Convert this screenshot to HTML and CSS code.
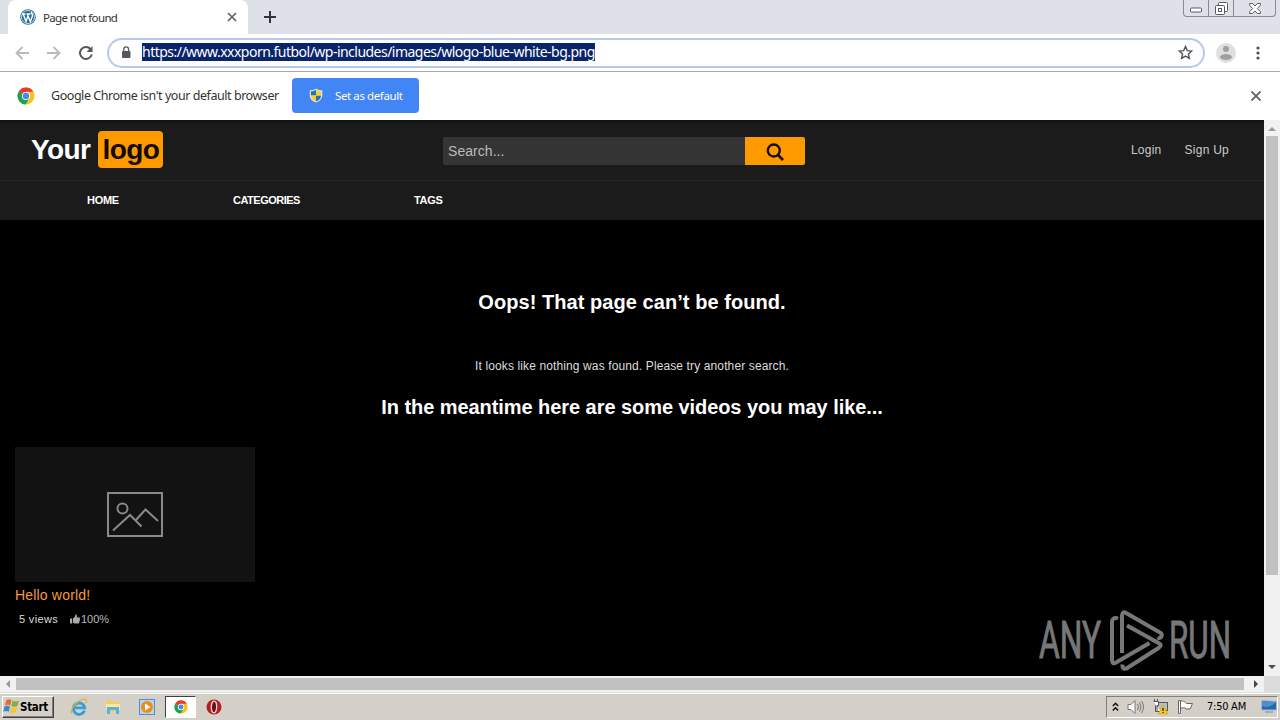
FILE: index.html
```html
<!DOCTYPE html>
<html lang="en">
<head>
  <meta charset="UTF-8">
  <title>Page not found</title>
  <link rel="stylesheet" href="styles.css">
</head>
<body>
  <svg width="0" height="0" class="defs">
    <symbol id="chrome" viewBox="0 0 18 18">
      <circle cx="9" cy="9" r="8.5" fill="#fbc116"/>
      <path d="M9 9L1.6 4.8A8.5 8.5 0 0 1 16.4 4.8H9z" fill="#e33b2e"/>
      <path d="M1.6 4.8A8.5 8.5 0 0 0 8.6 17.5L12.4 11 9 9z" fill="#1da05a"/>
      <circle cx="9" cy="9" r="4.1" fill="#fff"/>
      <circle cx="9" cy="9" r="3.2" fill="#4a87ee"/>
    </symbol>
  </svg>

  <div class="tabs">
    <div class="tab">
      <svg width="16" height="16" viewBox="0 0 16 16"><circle cx="8" cy="8" r="7.8" fill="#27709a"/><circle cx="8" cy="8" r="6.6" fill="none" stroke="#d9e9f1" stroke-width=".8"/><path d="M2 5h3.5M6.5 5h4M3.3 5.2L6 12.5 8 7M7.4 5.2L10.3 12.5 12.4 7.2C13 5 11 4.5 11.4 3" fill="none" stroke="#fff" stroke-width="1.4"/></svg>
      <span class="tab-title">Page not found</span>
      <svg class="tab-close" width="10" height="10" viewBox="0 0 10 10"><path d="M1 1l8 8M9 1L1 9" stroke="#5f6368" stroke-width="1.7"/></svg>
    </div>
    <svg class="new-tab" width="12" height="12" viewBox="0 0 12 12"><path d="M6 0v12M0 6h12" stroke="#303338" stroke-width="2"/></svg>
    <div class="win-buttons">
      <span><svg class="minimize" width="12" height="6" viewBox="0 0 12 6"><rect x=".5" y="1" width="11" height="4" rx="1" fill="#fff" stroke="#555a66"/></svg></span>
      <span><svg width="13" height="13" viewBox="0 0 13 13" fill="#fff" stroke="#555a66"><rect x="3.5" y=".5" width="9" height="9" rx="1"/><rect x=".5" y="3.5" width="9" height="9" rx="1"/><rect x="3.5" y="6.5" width="3" height="3"/></svg></span>
      <span><svg width="12" height="11" viewBox="0 0 12 11"><path d="M.7.5h3L6 3 8.3.5h3v2l-3 3 3 3v2h-3L6 8l-2.300 2.500h-3v-2l3-3-3-3z" fill="#fff" stroke="#555a66"/></svg></span>
    </div>
  </div>

  <div class="toolbar">
    <svg class="arrow" width="14" height="14" viewBox="0 0 14 14"><path d="M14 7H1.500M7.500 1l-6 6 6 6" fill="none" stroke="#b8babd" stroke-width="1.800"/></svg>
    <svg class="arrow" width="14" height="14" viewBox="0 0 14 14"><path d="M0 7h12.500M6.500 1l6 6-6 6" fill="none" stroke="#b8babd" stroke-width="1.800"/></svg>
    <svg class="reload" width="16" height="16" viewBox="0 0 16 16"><path d="M13.800 9.500A6 6 0 1 1 12.500 4" fill="none" stroke="#55585d" stroke-width="2"/><path d="M14.500 1v6h-6z" fill="#55585d"/></svg>
    <div class="address">
      <svg width="10" height="13" viewBox="0 0 10 13"><rect x="1" y="5" width="8.500" height="7" rx="1" fill="#55585d"/><path d="M2.800 5V3.300a2.400 2.400 0 0 1 4.800 0V5" fill="none" stroke="#55585d" stroke-width="1.300"/></svg>
      <span class="url">https://www.xxxporn.futbol/wp-includes/images/wlogo-blue-white-bg.png</span>
      <svg class="star" width="15" height="15" viewBox="0 0 15 15"><path d="M7.500 1.500l1.800 4.100 4.500.4-3.400 3 1 4.400-3.900-2.300-3.900 2.300 1-4.400-3.400-3 4.500-.4z" fill="none" stroke="#50535a" stroke-width="1.400"/></svg>
    </div>
    <svg class="avatar" width="20" height="20" viewBox="0 0 20 20"><circle cx="10" cy="10" r="10" fill="#dfdfdf"/><circle cx="10" cy="6" r="3" fill="#a0a0a0"/><ellipse cx="10" cy="14" rx="6" ry="3" fill="#a0a0a0"/></svg>
    <svg class="dots" width="4" height="14" viewBox="0 0 4 14" fill="#4c4f54"><circle cx="2" cy="2" r="1.600"/><circle cx="2" cy="7" r="1.600"/><circle cx="2" cy="12" r="1.600"/></svg>
  </div>

  <div class="infobar">
    <svg width="18" height="18"><use href="#chrome"/></svg>
    <span class="info-text">Google Chrome isn't your default browser</span>
    <div class="set-default">
      <svg width="14" height="15" viewBox="0 0 14 15"><path d="M7 .5C5 2 3 2.300.700 2.300V7c0 4 3 6.500 6.300 7.500 3.300-1 6.300-3.500 6.300-7.500V2.300C11 2.300 9 2 7 .5z" fill="#e8e7c8"/><path d="M7 1.800V7.500H1.900V3.300C4 3.300 5.500 2.800 7 1.800zM7 7.500h5c0 3-2 5-5 6z" fill="#2472bd"/><path d="M7 1.800c1.500 1 3 1.500 5 1.500v4.200H7zM7 7.500v6c-3-1-5-3-5.100-6z" fill="#f8cf32"/></svg>
      <span>Set as default</span>
    </div>
    <svg class="info-close" width="10" height="10" viewBox="0 0 10 10"><path d="M.5.5l9 9M9.500.5l-9 9" stroke="#62666a" stroke-width="1.900"/></svg>
  </div>

  <div class="view">
    <div class="page">
      <header>
        <div class="logo"><span>Your</span><span class="logo-box">logo</span></div>
        <div class="search">
          <div class="search-field">Search...</div>
          <div class="search-btn"><svg width="18" height="18" viewBox="0 0 18 18" fill="none" stroke="#110c08"><circle cx="7.800" cy="7.500" r="6" stroke-width="2.400"/><path d="M12 12l5 5" stroke-width="2.600"/></svg></div>
        </div>
        <div class="account"><span>Login</span><span>Sign Up</span></div>
      </header>
      <nav><span class="nav-home">HOME</span><span class="nav-cat">CATEGORIES</span><span class="nav-tags">TAGS</span></nav>
      <main>
        <h1>Oops! That page can’t be found.</h1>
        <p>It looks like nothing was found. Please try another search.</p>
        <h2>In the meantime here are some videos you may like...</h2>
        <div class="video">
          <div class="thumb">
            <svg width="56" height="45" viewBox="0 0 56 45" fill="none" stroke="#898989" stroke-width="2"><rect x="1" y="1" width="54" height="43"/><circle cx="15.500" cy="16.500" r="5"/><path d="M6 38.500l17-15.500 11.500 11.500M28.500 28.500L38.500 17.500l12.500 11.500"/></svg>
          </div>
          <div class="video-title">Hello world!</div>
          <div class="video-info"><span class="views">5 views</span><svg width="10" height="10" viewBox="0 0 10 10" fill="#aaa"><path d="M0 4.500h2.200V9.500H0zM3 4.500L5 2.500 5.400.5c1.600 0 1.800 1.400 1.200 3h3.200c.4 2-.2 4.500-1 6H4.500L3 8.800z"/></svg><span class="rate">100%</span></div>
        </div>
      </main>
      <svg class="watermark" width="204" height="66" viewBox="0 0 204 66">
        <g class="wm-text">
          <text x="1" y="49" textLength="62" lengthAdjust="spacingAndGlyphs">ANY</text>
          <text x="131" y="49" textLength="62" lengthAdjust="spacingAndGlyphs">RUN</text>
        </g>
        <g fill="none" stroke="#777" stroke-width="4" stroke-linejoin="round" stroke-linecap="butt">
          <path d="M80 9.500C76 8 74 10 74 13v38c0 3.500 1.500 4 4 2.500L111.500 34"/>
          <path d="M84 44V7c0-3 1.500-4.500 4-3l34 19.500c3.500 2 1 7-2.500 5"/>
          <path d="M89 16.500L120.500 34c3 1.500 3 3 0 5L90 58.500c-3.500 2.500-6 1-5.500-3"/>
        </g>
      </svg>
    </div>
    <div class="vscroll">
      <svg width="8" height="4" viewBox="0 0 8 4"><path d="M0 4l4-4 4 4z" fill="#9a9a9a"/></svg>
      <div class="vthumb"></div>
      <svg width="8" height="4" viewBox="0 0 8 4"><path d="M0 0h8L4 4z" fill="#4d4d4d"/></svg>
    </div>
  </div>

  <div class="hscroll">
    <svg width="4" height="8" viewBox="0 0 4 8"><path d="M4 0v8L0 4z" fill="#9a9a9a"/></svg>
    <div class="hthumb"></div>
    <svg width="4" height="8" viewBox="0 0 4 8"><path d="M0 0v8l4-4z" fill="#444"/></svg>
    <div class="corner"></div>
  </div>

  <div class="taskbar">
    <div class="start">
      <svg width="17" height="17" viewBox="0 0 16 16"><path d="M3 2c2-1 3-1 5 0L6.800 7c-2-1-3-1-5 0z" fill="#e86c32"/><path d="M9 2.500c2 1 4 1 6 0L13.500 7.500c-2 1-4 1-5.700 0z" fill="#7db343"/><path d="M1.500 8c2-1 3-1 5 0L5.300 13c-2-1-3-1-5 0z" fill="#3985c9"/><path d="M7.500 8.500c2 1 4 1 6 0L12 13.500c-2 1-4 1-5.700 0z" fill="#f4c637"/></svg>
      <span>Start</span>
    </div>
    <div class="quick">
      <svg width="18" height="18" viewBox="0 0 18 18" fill="none"><path d="M14.500 12.500A5.700 5.700 0 1 1 14.700 9.800H4" stroke="#369ed8" stroke-width="2.800"/><path d="M2 15.500C-1 13 7 2 14 1.200c3-.4 2.500 2.500 1.500 4" stroke="#e6ae32" stroke-width="1.300"/></svg>
      <svg width="18" height="18" viewBox="0 0 18 18"><path d="M2 2h5l1 2h8v10H2z" fill="#edcf69"/><path d="M2 6h14v6H2z" fill="#f9e8a0"/><path d="M3 9h12v7h-3v-4H6v4H3z" fill="#59afdf"/></svg>
      <svg width="18" height="18" viewBox="0 0 18 18"><rect x="1.500" y="1.500" width="15" height="15" fill="#b5d5ed" stroke="#4d92c8"/><circle cx="9" cy="9" r="6" fill="#ee8b20"/><path d="M7 5.500v7L12.500 9z" fill="#fff"/></svg>
    </div>
    <div class="task-active"><svg width="14" height="14"><use href="#chrome"/></svg></div>
    <svg class="opera" width="16" height="16" viewBox="0 0 16 16"><circle cx="8" cy="8" r="7.500" fill="#b51d20"/><ellipse cx="8" cy="8" rx="2.700" ry="5.800" fill="#6f1013" stroke="#f3dada" stroke-width="1.300"/></svg>
    <div class="tray">
      <svg width="7" height="10" viewBox="0 0 7 10"><path d="M.8 4L3.500 1.300 6.200 4M.8 8.500l2.700-2.700 2.700 2.700" fill="none" stroke="#111" stroke-width="1.500"/></svg>
      <svg width="17" height="16" viewBox="0 0 17 16" fill="none" stroke="#777"><path d="M1 5.500h3L8 1.500v13L4 10.500H1z" fill="#fff"/><path d="M10.500 5q2 3 0 6M12.500 3.500q3 4.500 0 9M14.500 2q4 6 0 12"/></svg>
      <svg width="17" height="16" viewBox="0 0 17 16"><rect x="5.500" y="3.500" width="10" height="8" fill="#b9bec2" stroke="#555"/><path d="M1.500 2.500h5v4H5v6h4M3.500 6.500v6h3" fill="#fff" stroke="#555"/><path d="M2.500 0v3M5.500 0v3" stroke="#555"/><path d="M11 6l5 9H6z" fill="#f5cb22" stroke="#c39a0d" stroke-width=".6"/><path d="M11 9v3M11 13v1" stroke="#222" stroke-width="1.300"/></svg>
      <svg width="17" height="16" viewBox="0 0 17 16" fill="#fff" stroke="#666"><path d="M1.500 1.500h2v13h-2zM3.500 2.500C7 1 8 3 9.500 4.500h6L13 10H9C7.500 8 6 8.500 3.500 9.500z"/></svg>
      <span class="clock">7:50 AM</span>
      <svg width="16" height="13" viewBox="0 0 16 13"><path d="M.5.5L15.500 1.500V10H.5z" fill="#2468ad" stroke="#9dbbd5"/><path d="M1 6Q8 9 15 2V1.800L1 1z" fill="#528fca"/><path d="M4 12h8" stroke="#7a8894"/></svg>
    </div>
  </div>
</body>
</html>
```
FILE: styles.css
```css
* { box-sizing: border-box; }
body { margin: 0; width: 1280px; height: 720px; overflow: hidden; background: #fff; font-family: "DejaVu Sans Condensed", "DejaVu Sans", sans-serif; color: #333; }
svg { display: block; flex: none; }
span { white-space: nowrap; }
.defs { position: absolute; }

/* browser */
.tabs { height: 34px; background: #dee1e7; display: flex; }
.tab { width: 240px; height: 34px; margin-left: 8px; padding: 0 12px; background: #fff; border-radius: 8px 8px 0 0; display: flex; align-items: center; }
.tab-title { font-family: "Noto Sans", sans-serif; font-size: 11.5px; margin-left: 7px; letter-spacing: -0.65px; }
.tab-close { margin-left: auto; margin-right: -1px; }
.new-tab { margin: 11px 0 0 16px; }
.win-buttons { display: flex; margin-left: auto; margin-right: 4px; height: 17px; border: 1px solid #858a94; border-top: 0; border-radius: 0 0 4px 4px; }
.win-buttons span { width: 25px; display: flex; align-items: center; justify-content: center; border-right: 1px solid #858a94; }
.win-buttons span:last-child { width: 41px; border-right: 0; }
.minimize { margin-top: 4px; }

.toolbar { height: 38px; border-bottom: 1px solid #a9a9af; display: flex; align-items: center; padding-left: 15px; }
.arrow { margin-right: 18px; }
.reload { margin-left: -1px; margin-right: 13px; }
.address { width: 1098px; height: 30px; border: 2px solid #b5c9ea; border-radius: 15px; display: flex; align-items: center; padding: 0 10px 0 12px; }
.url { font-family: "Noto Sans", sans-serif; font-size: 14px; line-height: 18px; height: 18px; margin-top: -1px; background: #0a246a; color: #fff; margin-left: 11px; letter-spacing: -0.52px; }
.star { margin-left: auto; }
.avatar { margin-left: 11px; }
.dots { margin-left: 20px; }

.infobar { height: 48px; background: #fff; display: flex; align-items: center; padding: 0 0 1px 17px; }
.info-text { font-family: "Noto Sans", sans-serif; font-size: 12.5px; margin-left: 16px; width: 241px; letter-spacing: -0.45px; }
.set-default { width: 127px; height: 35px; border-radius: 4px; background: #4285f4; color: #fff; display: flex; align-items: center; padding-left: 17px; gap: 12px; font: 11.5px "Noto Sans", sans-serif; letter-spacing: -0.4px; }
.info-close { margin-left: auto; margin-right: 19px; }

/* page */
.view { height: 556px; display: flex; }
.page { position: relative; width: 1264px; background: #000; color: #fff; font-family: "Liberation Sans", Arial, sans-serif; }
header { height: 61px; background: linear-gradient(#111, #1b1b1b 5px); border-bottom: 1px solid #252525; display: flex; padding: 0 35px 0 31px; }
.logo { display: flex; width: 412px; padding-top: 11px; font-size: 28px; font-weight: bold; line-height: 37px; letter-spacing: -0.6px; }
.logo-box { margin-left: 8px; width: 65px; height: 37px; background: #ff9900; color: #120b08; border-radius: 4px; text-align: center; }
.search { display: flex; height: 28px; margin-top: 17px; }
.search-field { width: 302px; background: #353535; color: #bbb; border-radius: 2px 0 0 2px; padding-left: 5px; font-size: 14px; line-height: 28px; letter-spacing: 0.05px; }
.search-btn { width: 60px; background: #ff9900; border-radius: 0 2px 2px 0; display: flex; align-items: center; justify-content: center; padding-top: 2px; }
.account { margin-left: auto; padding-top: 22px; display: flex; gap: 23px; font-size: 12px; line-height: 16px; color: #ccc; letter-spacing: 0.25px; }
nav { height: 39px; background: #1b1b1b; display: flex; padding-left: 87px; font-size: 11px; font-weight: bold; line-height: 38px; letter-spacing: -0.3px; }
.nav-home { width: 146px; }
.nav-cat { width: 181px; letter-spacing: -0.5px; }
main { text-align: center; }
h1, h2 { margin: 0; font-size: 20px; line-height: 24px; }
h1 { padding-top: 70px; letter-spacing: 0.06px; }
p { margin: 44px 0 0; font-size: 12px; line-height: 16px; color: #ddd; letter-spacing: 0.12px; }
h2 { margin-top: 21px; letter-spacing: -0.06px; }
.video { width: 240px; margin: 28px 0 0 15px; text-align: left; }
.thumb { height: 135px; background: #121212; display: flex; align-items: center; justify-content: center; }
.video-title { color: #f29b3c; font-size: 14px; line-height: 26px; letter-spacing: 0.18px; }
.video-info { display: flex; align-items: center; font-size: 11px; line-height: 22px; color: #bbb; padding-left: 4px; }
.views { width: 51px; color: #ddd; letter-spacing: 0.35px; }
.rate { margin-left: 1px; }
.watermark { position: absolute; left: 1038px; top: 489px; overflow: visible; }
.wm-text { font: 52px Roboto, sans-serif; fill: #777; stroke: #777; stroke-width: 1px; }

.vscroll { width: 16px; background: #f1f1f1; display: flex; flex-direction: column; align-items: center; padding: 7px 0; }
.vthumb { width: 12px; height: 439px; margin: 5px 0 auto; background: #c1c1c1; }
.hscroll { height: 16px; background: #f1f1f1; display: flex; align-items: center; padding-left: 6px; }
.hthumb { width: 1228px; height: 12px; margin: 0 10px 0 6px; background: #c1c1c1; }
.corner { width: 16px; height: 16px; margin-left: auto; background: #dcdcdc; }

/* taskbar */
.taskbar { height: 28px; background: #d4d0c8; border-top: 1px solid #e4e1da; box-shadow: inset 0 1px #fff; display: flex; align-items: center; padding: 0 2px; }
.start { width: 52px; height: 22px; background: #d4d0c8; border: 1px solid; border-color: #fff #404040 #404040 #fff; box-shadow: inset -1px -1px #808080; display: flex; align-items: center; padding-left: 0; color: #000; font-size: 11.5px; font-weight: bold; }
.start span { letter-spacing: -0.3px; }
.quick { display: flex; gap: 16px; margin-left: 16px; }
.task-active { width: 31px; height: 22px; margin-left: 9px; background: #fff; border: 1px solid; border-color: #404040 #fff #fff #404040; display: flex; align-items: center; justify-content: center; }
.opera { margin-left: 10px; }
.tray { width: 172px; height: 22px; margin-left: auto; border: 1px solid; border-color: #808080 #fff #fff #808080; display: flex; align-items: center; padding-left: 5px; gap: 8px; color: #000; }
.clock { width: 44px; margin-left: 5px; margin-right: 2px; font-size: 11px; letter-spacing: -0.25px; }
```
